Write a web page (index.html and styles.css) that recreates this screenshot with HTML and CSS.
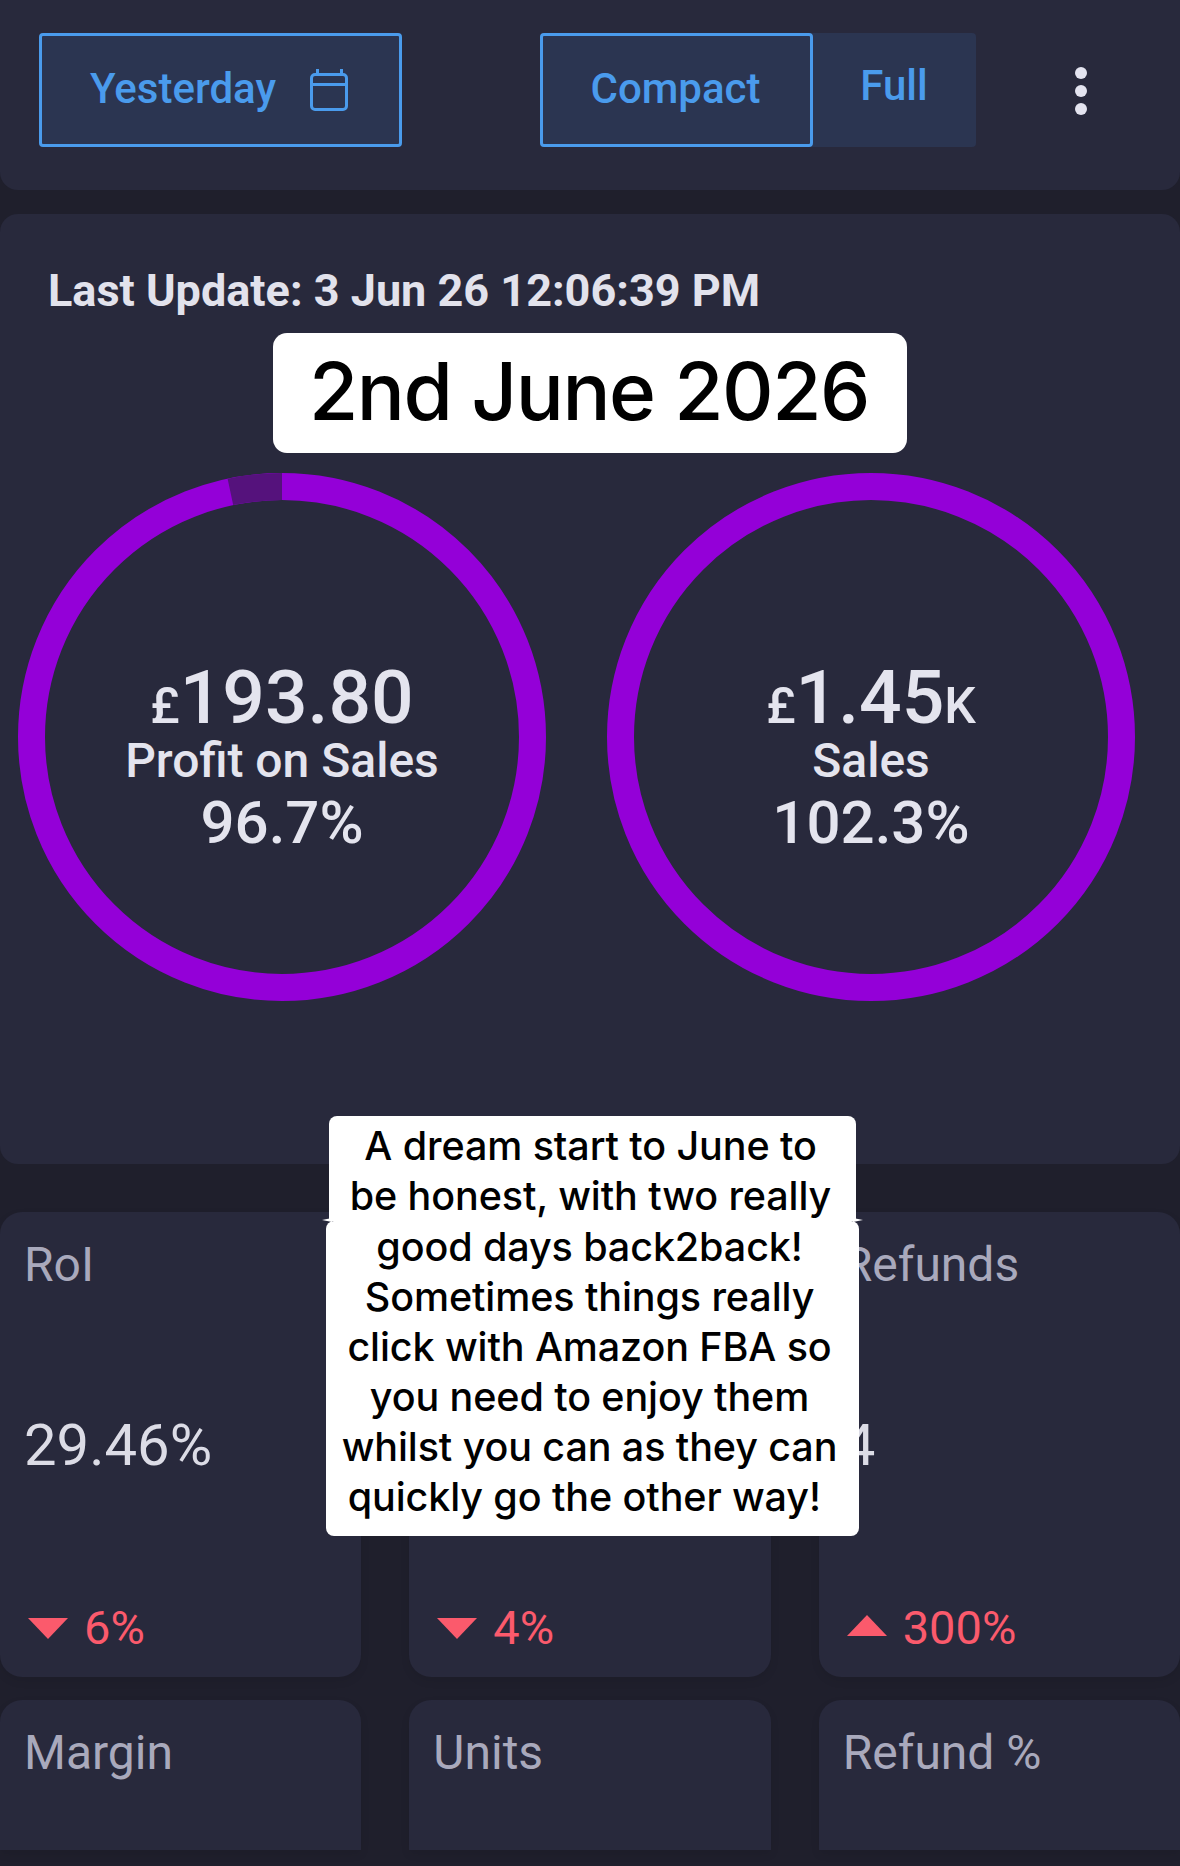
FILE: index.html
```html
<!DOCTYPE html>
<html lang="en">
<head>
    <meta charset="UTF-8">
    <meta name="viewport" content="width=device-width, initial-scale=1.0">
    <title>Dashboard</title>
    <link rel="stylesheet" href="styles.css">
</head>
<body>
    <div class="page">
        <div class="top-bar">
            <button class="btn btn-date">
                <span>Yesterday</span>
                <svg class="cal-icon" viewBox="0 0 38 42" fill="none" stroke="currentColor" stroke-width="3">
                    <rect x="1.5" y="5.5" width="35" height="35" rx="3.5"/>
                    <path d="M1.5 15.5H36.5M7.5 0V5M31.5 0V5"/>
                </svg>
            </button>
            <div class="toggle">
                <button class="btn btn-compact">Compact</button>
                <button class="btn-full">Full</button>
            </div>
            <div class="dots"><i></i><i></i><i></i></div>
        </div>

        <div class="main-card">
            <div class="last-update">Last Update: 3 Jun 26 12:06:39 PM</div>
            <div class="date-label">2nd June 2026</div>
            <div class="rings">
                <div class="ring">
                    <svg viewBox="0 0 528 528">
                        <circle class="ring-base" cx="264" cy="264" r="250.5"/>
                        <path class="ring-gap" d="M264 13.5A250.5 250.5 0 0 0 212.4 18.9"/>
                    </svg>
                    <div class="ring-text">
                        <div class="ring-value"><small>£</small>193.80</div>
                        <div class="ring-name">Profit on Sales</div>
                        <div class="ring-pct">96.7%</div>
                    </div>
                </div>
                <div class="ring">
                    <svg viewBox="0 0 528 528">
                        <circle class="ring-base" cx="264" cy="264" r="250.5"/>
                    </svg>
                    <div class="ring-text">
                        <div class="ring-value"><small>£</small>1.45<small>K</small></div>
                        <div class="ring-name">Sales</div>
                        <div class="ring-pct">102.3%</div>
                    </div>
                </div>
            </div>
        </div>

        <div class="tiles">
            <div class="tile">
                <div class="tile-label">RoI</div>
                <div class="tile-value">29.46%</div>
                <div class="tile-delta"><span class="tri tri-down"></span>6%</div>
            </div>
            <div class="tile">
                <div class="tile-label">&nbsp;</div>
                <div class="tile-value">&nbsp;</div>
                <div class="tile-delta"><span class="tri tri-down"></span>4%</div>
            </div>
            <div class="tile">
                <div class="tile-label">Refunds</div>
                <div class="tile-value">4</div>
                <div class="tile-delta"><span class="tri tri-up"></span>300%</div>
            </div>
            <div class="tile tile-cut"><div class="tile-label">Margin</div></div>
            <div class="tile tile-cut"><div class="tile-label">Units</div></div>
            <div class="tile tile-cut"><div class="tile-label">Refund %</div></div>
        </div>

        <div class="caption">
            <div class="caption-top">A dream start to June to<br>be honest, with two really</div>
            <div class="caption-bottom">good days back2back!<br>Sometimes things really<br>click with Amazon FBA so<br>you need to enjoy them<br>whilst you can as they can<br>quickly go the other way!&nbsp;</div>
        </div>
    </div>
</body>
</html>
```

FILE: styles.css
```css
* {
    margin: 0;
    padding: 0;
    box-sizing: border-box;
}

body {
    background: #1f1f2c;
    font-family: Roboto, sans-serif;
    overflow: hidden;
}

.page {
    position: relative;
    width: 1180px;
    height: 1866px;
    overflow: hidden;
}

/* top bar */
.top-bar {
    display: flex;
    align-items: flex-start;
    height: 190px;
    padding: 33px 0 0 39px;
    background: #28293c;
    border-radius: 0 0 18px 18px;
}

.btn {
    height: 114px;
    background: #2b3551;
    border: 3px solid #4a9bec;
    border-radius: 4px;
    color: #4a9bec;
    font-family: inherit;
    font-size: 42px;
    font-weight: 500;
}

.btn-date {
    display: flex;
    align-items: center;
    width: 363px;
    padding: 0 0 3px 48px;
    margin-right: 138px;
}

.cal-icon {
    width: 38px;
    height: 42px;
    margin: 3px 0 0 34px;
}

.toggle {
    display: flex;
    width: 436px;
    background: #2b3551;
    border-radius: 4px;
}

.btn-compact {
    width: 273px;
    padding: 0 2px 4px 0;
}

.btn-full {
    flex: 1;
    height: 104px;
    padding-right: 1px;
    background: none;
    border: none;
    color: #4a9bec;
    font-family: inherit;
    font-size: 42px;
    font-weight: 500;
}

.dots {
    display: flex;
    flex-direction: column;
    gap: 6px;
    margin: 34px 0 0 99px;
}

.dots i {
    display: block;
    width: 12px;
    height: 12px;
    border-radius: 50%;
    background: #e4e4f0;
}

/* main card */
.main-card {
    position: relative;
    height: 950px;
    margin-top: 24px;
    padding: 52px 18px 0;
    background: #28293c;
    border-radius: 18px;
}

.last-update {
    padding-left: 30px;
    font-size: 45px;
    font-weight: 700;
    line-height: 50px;
    color: #e2e2ec;
}

.date-label {
    position: absolute;
    left: 273px;
    top: 119px;
    width: 634px;
    height: 120px;
    padding-right: 2px;
    background: #fff;
    border-radius: 14px;
    color: #000;
    font-family: Inter, sans-serif;
    font-size: 80px;
    font-weight: 500;
    letter-spacing: -1.5px;
    line-height: 116px;
    text-align: center;
}

.rings {
    display: flex;
    gap: 61px;
    margin-top: 157px;
}

.ring {
    display: grid;
    width: 528px;
    height: 528px;
}

.ring svg,
.ring-text {
    grid-area: 1 / 1;
}

.ring svg {
    width: 528px;
    height: 528px;
}

.ring-base,
.ring-gap {
    fill: none;
    stroke-width: 27;
}

.ring-base {
    stroke: #9400d8;
}

.ring-gap {
    stroke: #55127c;
}

.ring-text {
    padding-top: 192px;
    font-weight: 500;
    color: #e4e4ee;
    text-align: center;
}

.ring-value {
    font-size: 75px;
    line-height: 65px;
}

.ring-value small {
    font-size: 50px;
}

.ring-name {
    font-size: 48px;
    line-height: 44px;
}

.ring-pct {
    margin-top: 4px;
    font-size: 60px;
    line-height: 72px;
}

/* tiles */
.tiles {
    display: grid;
    grid-template-columns: repeat(3, 1fr);
    grid-template-rows: 465px 150px;
    column-gap: 48px;
    row-gap: 23px;
    margin-top: 48px;
}

.tile {
    display: flex;
    flex-direction: column;
    padding: 25px 0 0 24px;
    background: #28293c;
    border-radius: 22px;
    box-shadow: 0 4px 10px rgba(0, 0, 0, 0.08);
}

.tile-cut {
    border-radius: 22px 22px 0 0;
}

.tile-label {
    font-size: 48px;
    line-height: 56px;
    color: #a9a9bc;
}

.tile-value {
    margin-top: 118px;
    font-size: 58px;
    line-height: 68px;
    color: #dcdce6;
}

.tile-delta {
    display: flex;
    align-items: center;
    margin-top: 121px;
    font-size: 47px;
    line-height: 56px;
    color: #fb5a6c;
}

.tri {
    width: 0;
    height: 0;
    margin: 0 16px 0 4px;
    border-left: 20px solid transparent;
    border-right: 20px solid transparent;
}

.tri-down {
    border-top: 21px solid #fb5a6c;
}

.tri-up {
    border-bottom: 21px solid #fb5a6c;
    margin-top: -6px;
}

/* white caption over the page */
.caption {
    position: absolute;
    left: 326px;
    top: 1116px;
    width: 533px;
    color: #000;
    font-family: Inter, sans-serif;
    font-size: 39.5px;
    font-weight: 500;
    letter-spacing: -0.1px;
    line-height: 50px;
    text-align: center;
}

.caption-top {
    width: 527px;
    height: 105px;
    margin: 0 auto;
    padding: 5px 4px 0 0;
    background: #fff;
    border-radius: 8px 8px 0 0;
}

.caption-bottom {
    position: relative;
    height: 315px;
    padding: 1px 6px 0 0;
    background: #fff;
    border-radius: 8px;
}

.caption-bottom::before,
.caption-bottom::after {
    content: "";
    position: absolute;
    top: -3px;
    border-top: 2px solid transparent;
    border-bottom: 2px solid transparent;
}

.caption-bottom::before {
    left: -4px;
    border-right: 10px solid #fff;
}

.caption-bottom::after {
    right: -4px;
    border-left: 10px solid #fff;
}
```
